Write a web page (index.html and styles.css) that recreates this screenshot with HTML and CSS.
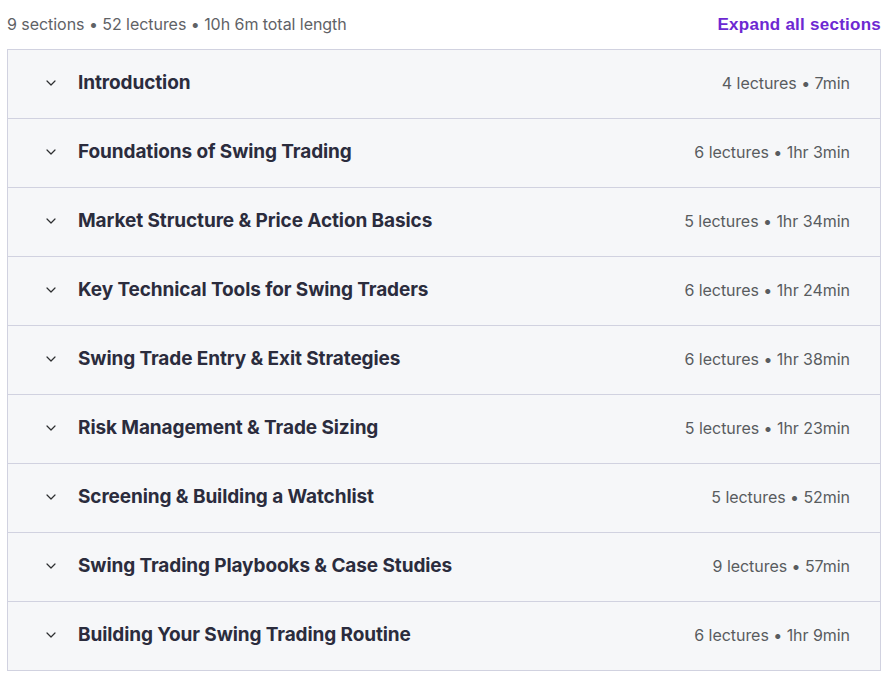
FILE: index.html
```html
<!DOCTYPE html>
<html lang="en">
<head>
<meta charset="utf-8">
<title>Course content</title>
<link rel="stylesheet" href="styles.css">
</head>
<body>
<div class="curriculum">
  <div class="summary">
    <span class="summary-text">9 sections • 52 lectures • 10h 6m total length</span>
    <button class="expand-all">Expand all sections</button>
  </div>
  <div class="sections">
    <div class="section">
      <svg class="chev" viewBox="0 0 24 24"><path d="M6 9l6 6 6-6"/></svg>
      <span class="title">Introduction</span>
      <span class="meta">4 lectures • 7min</span>
    </div>
    <div class="section">
      <svg class="chev" viewBox="0 0 24 24"><path d="M6 9l6 6 6-6"/></svg>
      <span class="title">Foundations of Swing Trading</span>
      <span class="meta">6 lectures • 1hr 3min</span>
    </div>
    <div class="section">
      <svg class="chev" viewBox="0 0 24 24"><path d="M6 9l6 6 6-6"/></svg>
      <span class="title">Market Structure &amp; Price Action Basics</span>
      <span class="meta">5 lectures • 1hr 34min</span>
    </div>
    <div class="section">
      <svg class="chev" viewBox="0 0 24 24"><path d="M6 9l6 6 6-6"/></svg>
      <span class="title">Key Technical Tools for Swing Traders</span>
      <span class="meta">6 lectures • 1hr 24min</span>
    </div>
    <div class="section">
      <svg class="chev" viewBox="0 0 24 24"><path d="M6 9l6 6 6-6"/></svg>
      <span class="title">Swing Trade Entry &amp; Exit Strategies</span>
      <span class="meta">6 lectures • 1hr 38min</span>
    </div>
    <div class="section">
      <svg class="chev" viewBox="0 0 24 24"><path d="M6 9l6 6 6-6"/></svg>
      <span class="title">Risk Management &amp; Trade Sizing</span>
      <span class="meta">5 lectures • 1hr 23min</span>
    </div>
    <div class="section">
      <svg class="chev" viewBox="0 0 24 24"><path d="M6 9l6 6 6-6"/></svg>
      <span class="title">Screening &amp; Building a Watchlist</span>
      <span class="meta">5 lectures • 52min</span>
    </div>
    <div class="section">
      <svg class="chev" viewBox="0 0 24 24"><path d="M6 9l6 6 6-6"/></svg>
      <span class="title">Swing Trading Playbooks &amp; Case Studies</span>
      <span class="meta">9 lectures • 57min</span>
    </div>
    <div class="section">
      <svg class="chev" viewBox="0 0 24 24"><path d="M6 9l6 6 6-6"/></svg>
      <span class="title">Building Your Swing Trading Routine</span>
      <span class="meta">6 lectures • 1hr 9min</span>
    </div>
  </div>
</div>
</body>
</html>
```

FILE: styles.css
```css
* { box-sizing: border-box; }

html, body {
  margin: 0;
  background: #ffffff;
}

body {
  padding: 0 7px;
  font-family: Inter, "Noto Sans", Arial, sans-serif;
  color: #2d2f31;
}

.summary {
  height: 49px;
  display: flex;
  align-items: center;
  justify-content: space-between;
  padding-bottom: 2px;
}

.summary-text {
  font-size: 16px;
  color: #5f6266;
  letter-spacing: -0.05px;
}

.expand-all {
  border: 0;
  background: none;
  padding: 2px 0 0;
  font-family: "Liberation Sans", Arial, sans-serif;
  font-size: 17px;
  font-weight: 700;
  color: #6d28d2;
  letter-spacing: 0.25px;
  cursor: pointer;
}

.sections {
  border: 1px solid #d1d2e0;
  border-bottom: 0;
}

.section {
  height: 69px;
  display: flex;
  align-items: center;
  background: #f6f7f9;
  border-bottom: 1px solid #d1d2e0;
  padding: 0 30px 3px 35px;
}

.chev {
  width: 16px;
  height: 16px;
  flex: none;
  fill: none;
  stroke: #2d2f31;
  stroke-width: 1.8;
  stroke-linecap: round;
  stroke-linejoin: round;
}

.title {
  margin-left: 19px;
  font-size: 19px;
  font-weight: 700;
  color: #2b2c3d;
  letter-spacing: -0.1px;
}

.meta {
  margin-left: auto;
  padding-top: 1px;
  font-size: 16px;
  color: #595c5f;
  letter-spacing: -0.05px;
}
```
